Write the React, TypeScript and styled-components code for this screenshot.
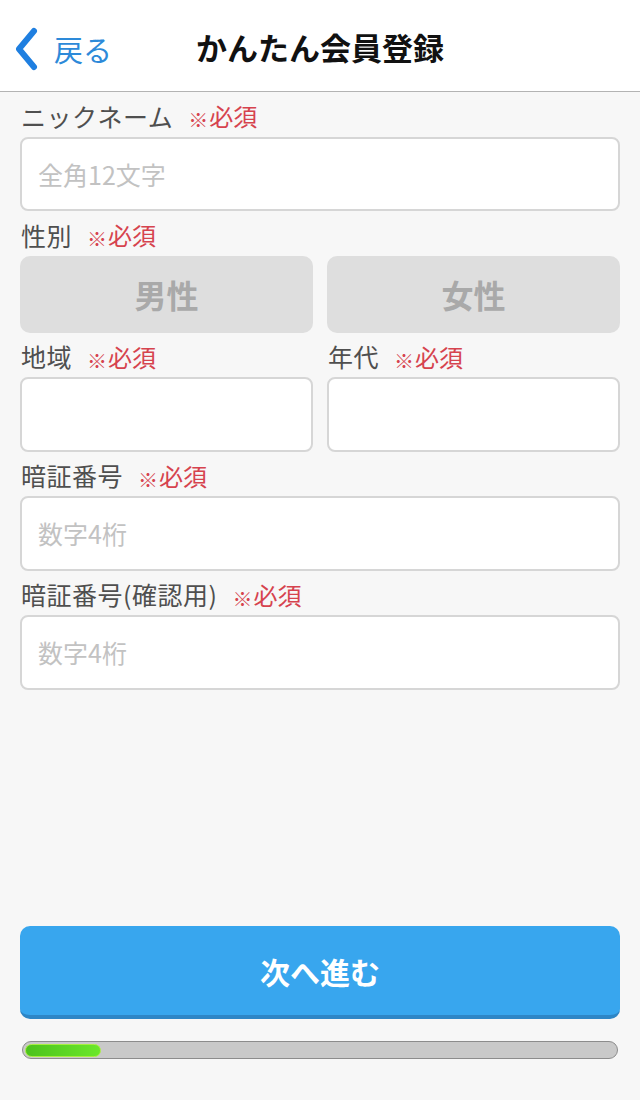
import styled, { createGlobalStyle } from "styled-components";

const JP = `"Noto Sans CJK JP", "Noto Sans", sans-serif`;

const GlobalStyle = createGlobalStyle`
  html, body {
    margin: 0;
    padding: 0;
    background: #f7f7f7;
    font-family: ${JP};
  }
  * { box-sizing: border-box; }
`;

const Page = styled.div`
  min-height: 1100px;
  display: flex;
  flex-direction: column;
  background: #f7f7f7;
`;

const Header = styled.header`
  position: relative;
  height: 92px;
  display: flex;
  align-items: center;
  justify-content: center;
  background: #ffffff;
  border-bottom: 1px solid #b3b3b3;
`;

const BackLink = styled.a`
  position: absolute;
  left: 14px;
  top: 27px;
  display: flex;
  align-items: center;
  gap: 16px;
  color: #2d8ad9;
  font-size: 29px;
  line-height: 42px;
  text-decoration: none;
`;

const Title = styled.h1`
  margin: 0;
  font-size: 31px;
  font-weight: 700;
  color: #111111;
  line-height: 1;
  padding-top: 2px;
`;

const Form = styled.main`
  flex: 1;
  display: flex;
  flex-direction: column;
  padding: 0 20px;
`;

const Row = styled.div`
  display: grid;
  grid-template-columns: 1fr 1fr;
  gap: 14px;
`;

const Field = styled.div`
  display: flex;
  flex-direction: column;
`;

const Label = styled.div`
  height: 44.5px;
  display: flex;
  align-items: center;
  gap: 15px;
  padding: 3px 0 0 1px;
  font-size: 25px;
  color: #4f4f4f;
  letter-spacing: 0.5px;
`;

const Required = styled.span`
  color: #d6434e;
  font-size: 24px;
  letter-spacing: 0;

  small {
    font-size: 20px;
    font-weight: 700;
    margin-right: 1px;
    position: relative;
    top: 2px;
  }
`;

const Input = styled.div`
  height: 74.5px;
  display: flex;
  align-items: center;
  padding: 0 16px;
  background: #ffffff;
  border: 2px solid #d6d6d6;
  border-radius: 8px;
  font-size: 25px;
  color: #c2c2c2;
`;

const Choice = styled.button`
  height: 77px;
  border: 0;
  border-radius: 10px;
  background: #dedede;
  color: #a9a9a9;
  font-family: ${JP};
  font-size: 32px;
  font-weight: 700;
  padding: 0;
`;

const Footer = styled.footer`
  display: flex;
  flex-direction: column;
  gap: 22px;
  padding: 0 20px 41px;
`;

const NextButton = styled.button`
  height: 93px;
  border: 0;
  border-bottom: 4px solid #2e86c6;
  border-radius: 10px;
  background: #38a6ee;
  color: #ffffff;
  font-family: ${JP};
  font-size: 30px;
  font-weight: 700;
  padding: 0;
`;

const Progress = styled.div`
  height: 18px;
  margin: 0 2px;
  padding: 1.5px;
  border: 1.5px solid #8c8c8c;
  border-radius: 9px;
  background: #c9c9c9;
  display: flex;
`;

const ProgressFill = styled.div`
  height: 100%;
  border-radius: 8px;
  border: 1.5px solid #a6ef3f;
  background: linear-gradient(90deg, #4cc21c, #6be72b);
`;

function RequiredMark() {
  return (
    <Required>
      <small>※</small>必須
    </Required>
  );
}

export default function App() {
  const progress = 0.13;
  return (
    <Page>
      <GlobalStyle />
      <Header>
        <BackLink href="#">
          <svg width="24" height="44" viewBox="0 0 24 44" aria-hidden="true">
            <path d="M20 4 L5 22 L20 40" fill="none" stroke="#1f7fe0" strokeWidth="6" strokeLinecap="round" strokeLinejoin="round" />
          </svg>
          戻る
        </BackLink>
        <Title>かんたん会員登録</Title>
      </Header>

      <Form>
        <Field>
          <Label>ニックネーム<RequiredMark /></Label>
          <Input>全角12文字</Input>
        </Field>
        <Field>
          <Label>性別<RequiredMark /></Label>
          <Row>
            <Choice type="button">男性</Choice>
            <Choice type="button">女性</Choice>
          </Row>
        </Field>
        <Row>
          <Field>
            <Label>地域<RequiredMark /></Label>
            <Input />
          </Field>
          <Field>
            <Label>年代<RequiredMark /></Label>
            <Input />
          </Field>
        </Row>
        <Field>
          <Label>暗証番号<RequiredMark /></Label>
          <Input>数字4桁</Input>
        </Field>
        <Field>
          <Label>暗証番号(確認用)<RequiredMark /></Label>
          <Input>数字4桁</Input>
        </Field>
      </Form>

      <Footer>
        <NextButton type="button">次へ進む</NextButton>
        <Progress>
          <ProgressFill style={{ width: `${progress * 100}%` }} />
        </Progress>
      </Footer>
    </Page>
  );
}
